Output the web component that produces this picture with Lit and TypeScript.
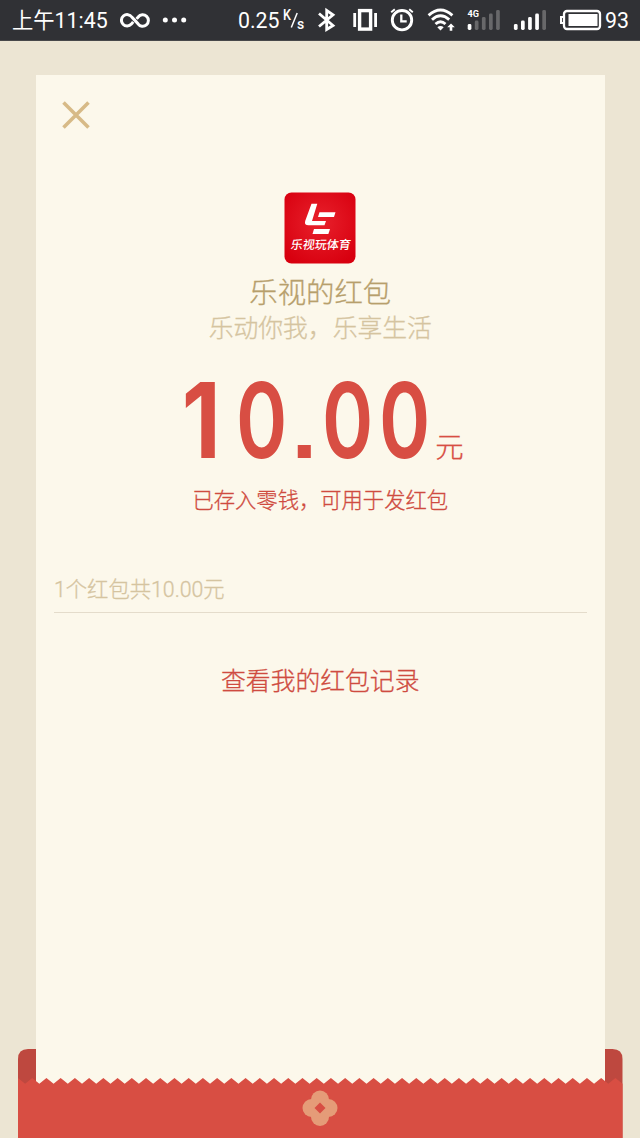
import { LitElement, html, css, svg } from "lit";
import { customElement } from "lit/decorators.js";

@customElement("status-bar")
class StatusBar extends LitElement {
  static styles = css`
    :host { display: grid; grid-template-columns: 238px 1fr; height: 41px; background: #303135; color: #fff; border-bottom: 1px solid #48484a; box-sizing: border-box; font: 21.3px/40px Roboto, "Noto Sans CJK SC", sans-serif; }
    .group { display: flex; align-items: center; white-space: nowrap; height: 40px; }
    .left { padding-left: 12px; }
    .time, .speed, .battery { padding-top: 1px; }
    .time { width: 108px; }
    .speed { width: 44px; }
    .battery { width: 30px; }
    svg { display: block; flex: none; }
    .unit { font: 500 14px Roboto, sans-serif; fill: #fff; }
    .net { font: 700 9.5px Roboto, sans-serif; fill: #fff; }
  `;
  render() {
    const bars = (x: number, lit: number) =>
      [0, 1, 2, 3, 4].map((i) => svg`<rect x=${x + i * 7.1} y=${24 - i * 3.5} width="3.7" height=${6 + i * 3.5} rx="1.4" fill=${i < lit ? "#fff" : "#68686a"}/>`);
    return html`
      <div class="group left">
        <span class="time">上午11:45</span>
        <svg width="70" height="40" viewBox="120 0 70 40" fill="none" stroke="#fff" stroke-width="3">
          <path d="M133.2 21.8 131.4 24.1A5.7 5.7 0 1 1 131.8 17L138 23.8A5.7 5.7 0 1 0 138.2 17L136.6 18.9"/>
          <g fill="#fff" stroke="none"><circle cx="165.3" cy="20" r="2.5"/><circle cx="174.5" cy="20" r="2.5"/><circle cx="183.7" cy="20" r="2.5"/></g>
        </svg>
      </div>
      <div class="group">
        <span class="speed">0.25</span>
        <svg width="323" height="40" viewBox="282 0 323 40" fill="none" stroke="#fff">
          <text class="unit" x="283" y="19.5" textLength="8" lengthAdjust="spacingAndGlyphs" stroke="none">K</text>
          <path d="M297.2 13 291.3 27.5" stroke-width="1.5"/>
          <text class="unit" x="297" y="28.7" stroke="none">s</text>
          <path d="M319 13.5 333 25.5 326.7 29.5V10.5L333 14.8 319 26.5" stroke-width="2.8"/>
          <rect x="359.6" y="10.6" width="11" height="18.5" stroke-width="3.4"/>
          <path d="M354.7 13v14M375.6 13v14" stroke-width="2.8"/>
          <circle cx="402" cy="20.2" r="9.7" stroke-width="2.9"/>
          <path d="M401.3 14.5v6.8h5.4" stroke-width="2.3"/>
          <path d="M391.2 12.2 394.8 9.3M412.8 12.2 409.2 9.3" stroke-width="2"/>
          <path d="M428.6 15.3Q440.5 4.8 452.4 15.3M432 19.7Q440.5 12 449.2 19.7M435.5 24Q440.5 19.4 445.5 24" stroke-width="2.9"/>
          <path d="M437.3 27.2Q440.5 24.6 443.7 27.2L440.5 30.6Z" fill="#fff" stroke="none"/>
          <path d="M451 23.6 454.8 27.2H452.3V30.8H449.7V27.2H447.2Z" fill="#fff" stroke="none"/>
          <text class="net" x="467.5" y="17" textLength="11.5" lengthAdjust="spacingAndGlyphs" stroke="none">4G</text>
          <g stroke="none">${bars(467.7, 1)}${bars(513.9, 4)}</g>
          <rect x="564" y="11" width="36" height="18" rx="3" stroke-width="2.3"/>
          <rect x="568.5" y="14" width="29" height="12" fill="#fff" stroke="none"/>
          <path d="M563.5 17h-2.5v6h2.5" stroke-width="2"/>
        </svg>
        <span class="battery">93</span>
      </div>`;
  }
}

@customElement("brand-badge")
class BrandBadge extends LitElement {
  static styles = css`
    :host { display: block; width: 72px; height: 72px; }
    svg { display: block; }
    text { font: 500 11.9px "Noto Sans CJK SC", sans-serif; fill: #fff; }
  `;
  render() {
    return html`<svg width="72" height="72" viewBox="0 0 72 72">
      <defs><radialGradient id="glow" cx="50%" cy="42%" r="65%"><stop offset="0" stop-color="#e8212c"/><stop offset="1" stop-color="#d8000f"/></radialGradient></defs>
      <rect x=".5" y=".5" width="71" height="71" rx="7" fill="url(#glow)"/>
      <g fill="#fff">
        <path d="M27.5 11.7H33.3L28 29H42L40.5 33.3H24.5Q20 33.3 21.2 29Z"/>
        <path d="M35.5 20.3H51.5L50 25H34Z"/>
        <path d="M30 37H46L44.4 42H28.5Z"/>
      </g>
      <text transform="translate(6.2 57) skewX(-8)" textLength="60" lengthAdjust="spacingAndGlyphs">乐视玩体育</text>
    </svg>`;
  }
}

@customElement("app-root")
class AppRoot extends LitElement {
  static styles = css`
    :host { display: flex; flex-direction: column; height: 1138px; background: #ece5d3; font-family: Roboto, "Noto Sans CJK SC", sans-serif; overflow: hidden; }
    .stage { flex: 1; display: grid; grid-template: 1fr / 1fr; min-height: 0; }
    .stage > * { grid-area: 1 / 1; }
    .envelope { align-self: end; display: block; }
    .card { margin: 34px 35.5px 50px 36px; background: #fcf8eb; display: flex; flex-direction: column; align-items: center; font-weight: 300; -webkit-text-stroke: .3px currentColor; }
    .close { align-self: flex-start; margin: 26px 0 0 26px; display: block; }
    brand-badge { margin-top: 63px; -webkit-text-stroke: 0; }
    .line { white-space: nowrap; text-align: center; }
    .title { font-size: 28.4px; line-height: 36px; color: #b79f6c; margin-top: 12px; }
    .slogan { font-size: 24.8px; line-height: 34px; color: #d5c4a0; }
    .amount { display: flex; align-items: baseline; height: 100px; margin: 24px 0 0 9px; color: #d84e43; line-height: 100px; }
    .digit { display: flex; justify-content: center; width: 57.2px; font: 600 105px/100px Inter, sans-serif; -webkit-text-stroke: 0; }
    .digit b { display: block; font-weight: inherit; transform: scaleX(.74); }
    .digit.one { width: 47px; font-weight: 700; }
    .one b { transform: translateX(-8.5px) scaleX(.86); }
    .digit.dot { width: 29px; font-family: "Liberation Sans", sans-serif; font-size: 88px; font-weight: 700; }
    .dot b { transform: scaleX(1.05); }
    .yuan { font-size: 28.4px; margin-left: 2px; }
    .saved { font-size: 21.3px; line-height: 30px; color: #cf4b40; margin-top: 16px; }
    .total { align-self: stretch; margin: 59px 18px 0; padding-bottom: 7px; border-bottom: 1px solid #e4dccb; font-size: 21.3px; line-height: 30px; color: #d5c4a0; }
    .records { font-size: 24.8px; line-height: 34px; color: #cf4b40; margin-top: 52px; }
  `;
  render() {
    let edge = "M18 7";
    for (let i = 0; i < 85; i++) edge += `L${(18 + (i + 1) * 7.112).toFixed(2)} ${i % 2 ? 7 : 12.7}`;
    return html`
      <status-bar></status-bar>
      <main class="stage">
        <svg class="envelope" width="640" height="90" viewBox="0 0 640 90">
          <path d="M18 90V11Q18 1 28 1H612.5Q622.5 1 622.5 11V90Z" fill="#be483f"/>
        </svg>
        <section class="card">
          <svg class="close" width="28" height="28" viewBox="0 0 28 28"><path d="M1.5 1.5 26.5 26.5M26.5 1.5 1.5 26.5" stroke="#d7ba87" stroke-width="3.6"/></svg>
          <brand-badge></brand-badge>
          <div class="line title">乐视的红包</div>
          <div class="line slogan">乐动你我，乐享生活</div>
          <div class="amount">
            <span class="digit one"><b>1</b></span><span class="digit"><b>0</b></span><span class="digit dot"><b>.</b></span><span class="digit"><b>0</b></span><span class="digit"><b>0</b></span><span class="yuan">元</span>
          </div>
          <div class="line saved">已存入零钱，可用于发红包</div>
          <div class="total">1个红包共10.00元</div>
          <div class="line records">查看我的红包记录</div>
        </section>
        <svg class="envelope" width="640" height="67" viewBox="0 0 640 67">
          <path d="${edge}V67H18Z" fill="#d84e43"/>
          <g fill="#e59c78"><circle cx="320" cy="28.5" r="9"/><circle cx="320" cy="46" r="9"/><circle cx="311.5" cy="37" r="9"/><circle cx="328.5" cy="37" r="9"/></g>
          <path d="M320 31.5 325.5 37 320 42.5 314.5 37Z" fill="#d84e43"/>
        </svg>
      </main>`;
  }
}
